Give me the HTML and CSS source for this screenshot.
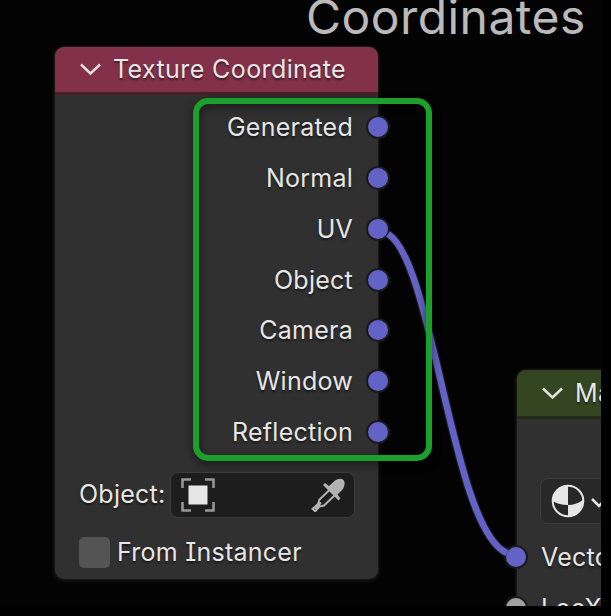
FILE: index.html
```
<!DOCTYPE html>
<html lang="en">
<head>
<meta charset="utf-8">
<title>Shader nodes</title>
<link rel="stylesheet" href="styles.css">
</head>
<body>
<main class="canvas">
  <div class="frame-label">Coordinates</div>

  <section class="node texture-node">
    <header class="node-header">
      <svg class="chevron" viewBox="0 0 24 14"><path d="M2 2.500 L11.500 11.500 L21 2.500"/></svg>
      <span>Texture Coordinate</span>
    </header>
    <ul class="outputs">
      <li>Generated<i class="socket"></i></li>
      <li>Normal<i class="socket"></i></li>
      <li>UV<i class="socket"></i></li>
      <li>Object<i class="socket"></i></li>
      <li>Camera<i class="socket"></i></li>
      <li>Window<i class="socket"></i></li>
      <li>Reflection<i class="socket"></i></li>
    </ul>
    <div class="object-row">
      <span>Object:</span>
      <div class="field">
        <svg class="object-icon" viewBox="0 0 34 34">
          <path d="M1.500 10V1.500H10M24 1.500H32.500V10M32.500 24V32.500H24M10 32.500H1.500V24"/>
          <rect x="7.500" y="7.500" width="19" height="19"/>
        </svg>
        <svg class="dropper-icon" viewBox="0 0 34 34">
          <path class="bulb" d="M18 8 L24 2.500 Q29 -.5 32.500 2 Q35 6 32 11 L26.500 16.500 L29.500 20.500 L27.500 22.500 L12 7 L14 5 Z"/>
          <path class="tube" d="M18.500 12 L8.500 21.500 L7 26 L1.500 31 M24 17 L13 27.500 L8.500 28.500 L4.500 33 M10 24.500 L4 31 M.8 30.300 L4.800 33.800"/>
        </svg>
      </div>
    </div>
    <label class="check-row"><i class="checkbox"></i><span>From Instancer</span></label>
  </section>

  <section class="node mapping-node">
    <header class="node-header">
      <svg class="chevron" viewBox="0 0 24 14"><path d="M2 2.500 L11.500 11.500 L21 2.500"/></svg>
      <span>Mapping</span>
    </header>
    <div class="group-select">
      <svg class="material-icon" viewBox="0 0 34 34">
        <circle cx="17" cy="17" r="15.300"/>
        <path d="M17 1 V21 Q8 21 1.500 17 A15.500 15.500 0 0 1 17 1 Z M17 21 Q25 21 32 16 A15.500 15.500 0 0 1 17 33 Z"/>
      </svg>
      <svg class="small-chevron" viewBox="0 0 18 12"><path d="M2 2 L9 9 L16 2"/></svg>
    </div>
    <ul class="inputs">
      <li><i class="socket"></i>Vector</li>
      <li><i class="socket value"></i>LocX</li>
    </ul>
  </section>

  <svg class="link" viewBox="0 0 601 606">
    <path class="link-edge" d="M388 234 C434 262 452 530 507 553"/>
    <path class="link-core" d="M388 234 C434 262 452 530 507 553"/>
  </svg>
  <div class="highlight"></div>
</main>
</body>
</html>
```

FILE: styles.css
```
* { box-sizing: border-box; }

body {
  margin: 0;
  background: #000;
  font-family: Inter, "Liberation Sans", sans-serif;
  font-size: 25px;
  letter-spacing: .25px;
  line-height: 30px;
  color: #e6e6e6;
  font-feature-settings: "cv08" 1;
}

svg { display: block; fill: none; flex: none; }

ul { list-style: none; margin: 0; padding: 0; }

.canvas {
  position: relative;
  width: 601px;
  height: 606px;
  overflow: hidden;
  background: #030303;
}

.frame-label {
  position: absolute;
  left: 306px;
  top: -8px;
  font-size: 48px;
  letter-spacing: .45px;
  line-height: 50px;
  color: #bababa;
  white-space: nowrap;
}

.node {
  position: absolute;
  background: #303030;
  border-radius: 9px;
  box-shadow: 0 0 0 1px #161616, 0 1px 3px 2px #111;
  text-shadow: 0 2px 2px rgba(0, 0, 0, .5);
}

.texture-node { left: 55px; top: 47px; width: 323px; height: 532px; }
.mapping-node { left: 517px; top: 370px; width: 323px; height: 300px; }

.node-header {
  display: flex;
  align-items: center;
  gap: 10px;
  height: 48px;
  padding: 0 0 1px 24px;
  border-radius: 9px 9px 0 0;
  border-bottom: 3px solid #46202d;
  background: #83314a;
  letter-spacing: .4px;
}

.mapping-node .node-header {
  height: 49px;
  padding-bottom: 0;
  border-bottom-color: #222c18;
  background: #344621;
}

.chevron { width: 24px; height: 14px; stroke: #e3dfe0; stroke-width: 2.500px; }

.outputs { padding-top: 7px; }

.outputs li {
  display: flex;
  align-items: center;
  justify-content: flex-end;
  gap: 13px;
  height: 50.750px;
  margin-right: -12px;
}

.socket {
  width: 24px;
  height: 24px;
  border: 2px solid #1a1a1a;
  border-radius: 50%;
  background: #6363c7;
}

.socket.value { background: #a1a1a1; }

.object-row {
  display: flex;
  align-items: center;
  margin-top: 14.750px;
  padding-left: 24px;
}

.object-row > span { width: 91px; padding-bottom: 2px; }

.field {
  display: flex;
  align-items: center;
  justify-content: space-between;
  width: 185px;
  height: 46px;
  padding: 0 9px 0 10px;
  border: 1px solid #3d3d3d;
  border-radius: 8px;
  background: #1d1d1d;
}

.object-icon { width: 34px; height: 34px; stroke: #989898; stroke-width: 2.500px; }
.object-icon rect { fill: #e6e6e6; stroke: none; }
.dropper-icon { width: 34px; height: 34px; }
.bulb { fill: #b2b2b2; }
.tube { stroke: #b2b2b2; stroke-width: 2px; }

.check-row {
  display: flex;
  align-items: center;
  gap: 7px;
  margin-top: 18.500px;
  padding-left: 24px;
}

.checkbox { width: 31px; height: 31px; border-radius: 5px; background: #545454; }

.group-select {
  display: flex;
  align-items: center;
  gap: 5px;
  width: 280px;
  height: 46px;
  margin: 59px 0 0 23px;
  padding-left: 10px;
  border: 1px solid #3d3d3d;
  border-radius: 8px;
  background: #282828;
}

.material-icon { width: 34px; height: 34px; }
.material-icon circle { stroke: #e6e6e6; stroke-width: 2px; }
.material-icon path { fill: #e6e6e6; }
.small-chevron { width: 18px; height: 12px; margin-top: 3px; stroke: #e6e6e6; stroke-width: 2.500px; }

.inputs { padding-top: 8px; }

.inputs li {
  display: flex;
  align-items: center;
  gap: 13px;
  height: 50.800px;
  margin-left: -13px;
}

.link { position: absolute; left: 0; top: 0; width: 601px; height: 606px; }
.link-edge { stroke: #1c1c1c; stroke-width: 9px; }
.link-core { stroke: #6363c7; stroke-width: 6.500px; }

.highlight {
  position: absolute;
  left: 193px;
  top: 98px;
  width: 239px;
  height: 363px;
  border: 6px solid #1c9f2b;
  border-radius: 15px;
  filter: drop-shadow(0 3px 4px rgba(0, 0, 0, .55));
}
```
